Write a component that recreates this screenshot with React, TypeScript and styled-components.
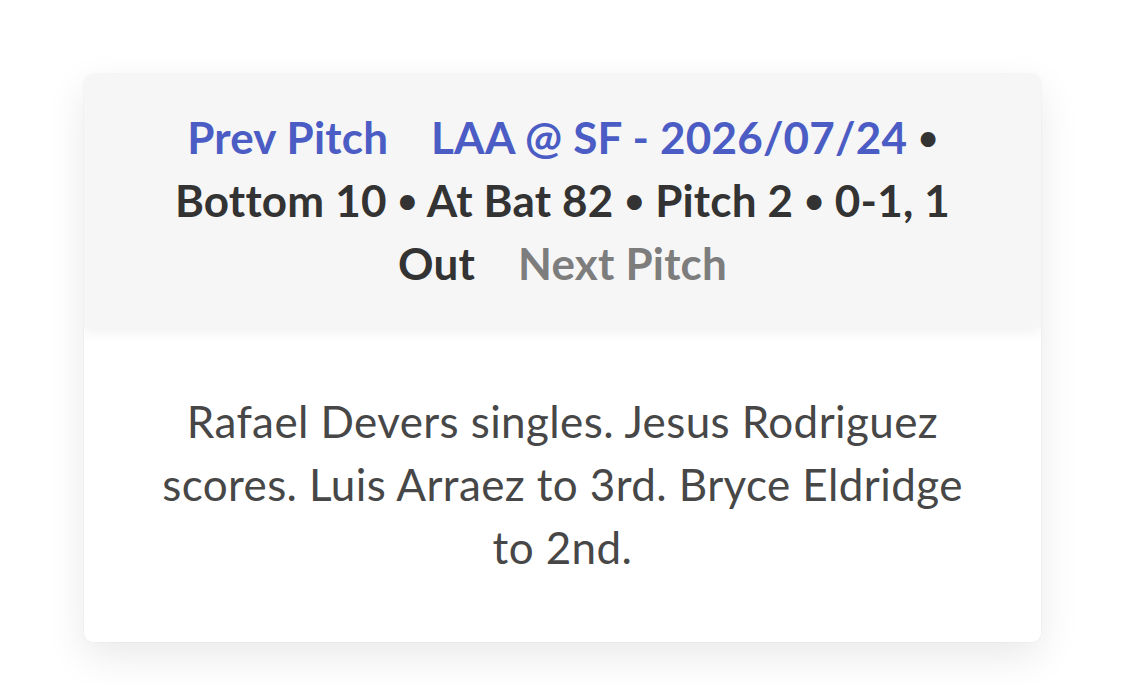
import React from 'react'
import styled, { createGlobalStyle } from 'styled-components'

const GlobalStyle = createGlobalStyle`
  html, body {
    margin: 0;
    padding: 0;
    background-color: #ffffff;
  }

  body {
    font-family: Lato, 'Open Sans', sans-serif;
    -webkit-font-smoothing: antialiased;
  }
`

const Page = styled.div`
  display: flex;
  justify-content: center;
  padding: 74px 84px 0;
  min-height: 685px;
  box-sizing: border-box;
`

const Card = styled.section`
  width: 100%;
  display: flex;
  flex-direction: column;
  align-self: flex-start;
  background-color: #ffffff;
  border-radius: 9px;
  overflow: hidden;
  box-shadow: 0 0 0 1px rgba(0, 0, 0, 0.02), 0 14px 40px rgba(0, 0, 0, 0.09);
`

const Header = styled.header`
  position: relative;
  z-index: 1;
  padding: 32px 78px;
  background-color: #f6f6f6;
  text-align: center;
  font-size: 44px;
  font-weight: 700;
  letter-spacing: 0.2px;
  line-height: 63px;
  color: #333333;
  box-shadow: 0 6px 12px rgba(0, 0, 0, 0.05);
`

const NavLink = styled.a<{ $disabled?: boolean }>`
  color: ${p => (p.$disabled ? '#7d7d7d' : '#4b5cc4')};
  text-decoration: none;
  cursor: ${p => (p.$disabled ? 'default' : 'pointer')};
`

const GameLink = styled.a`
  color: #4b5cc4;
  text-decoration: none;
`

// bullet between the at-bat details
const Dot = styled.span`
  font-size: 34px;
  line-height: 1;
  letter-spacing: 0;
  vertical-align: 4px;
`

const Spacer = styled.span`
  display: inline-block;
  width: 32px;
`

const Body = styled.div`
  padding: 63px 78px;
  text-align: center;
  font-size: 44px;
  font-weight: 400;
  letter-spacing: 0.4px;
  line-height: 63px;
  color: #474747;
`

const Description = styled.p`
  margin: 0;
`

const details = ['Bottom 10', 'At Bat 82', 'Pitch 2', '0-1, 1 Out']

export default function App() {
  return (
    <>
      <GlobalStyle />
      <Page>
        <Card>
          <Header>
            <NavLink href="#">Prev Pitch</NavLink>
            <Spacer />{' '}
            <GameLink href="#">LAA @ SF - 2026/07/24</GameLink>
            {details.map(d => (
              <React.Fragment key={d}>
                {' '}
                <Dot>•</Dot> {d}
              </React.Fragment>
            ))}
            <Spacer />{' '}
            <NavLink $disabled>Next Pitch</NavLink>
          </Header>
          <Body>
            <Description>
              Rafael Devers singles. Jesus Rodriguez scores. Luis Arraez to 3rd. Bryce Eldridge to
              2nd.
            </Description>
          </Body>
        </Card>
      </Page>
    </>
  )
}
